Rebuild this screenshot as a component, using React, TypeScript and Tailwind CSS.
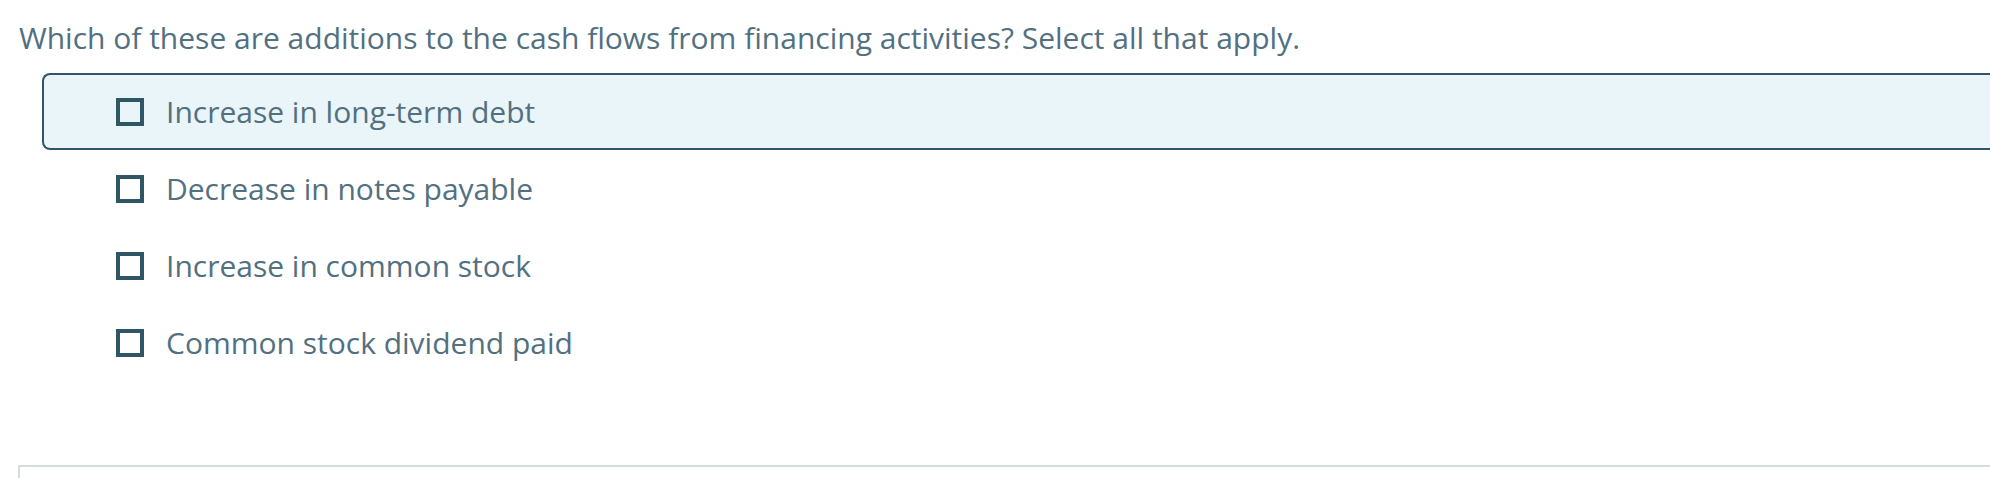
import { useState } from 'react';

const options = [
  'Increase in long-term debt',
  'Decrease in notes payable',
  'Increase in common stock',
  'Common stock dividend paid',
];

export default function App() {
  const [checked, setChecked] = useState<boolean[]>([false, false, false, false]);
  const focused = 0;

  return (
    <div className="min-h-[478px] bg-white overflow-hidden" style={{ fontFamily: '"Open Sans", "Noto Sans", sans-serif' }}>
      {/* Question */}
      <div className="pl-[19px] pt-[20px]">
        <p className="text-[30px] leading-[36px] text-[#52707f]">
          Which of these are additions to the cash flows from financing activities? Select all that apply.
        </p>

        {/* Options */}
        <ul className="mt-[17px] ml-[23px]">
          {options.map((label, i) => (
            <li key={label}>
              <label
                className={
                  i === focused
                    ? 'flex items-center h-[77px] pl-[72px] border-2 border-r-0 border-[#2e5665] rounded-l-[8px] bg-[#e9f5f8] cursor-pointer'
                    : 'flex items-center h-[77px] pl-[72px] border-2 border-transparent cursor-pointer'
                }
              >
                <span className="w-[28px] h-[28px] border-[4px] border-[#2e5665] shrink-0" />
                <input
                  type="checkbox"
                  className="hidden"
                  checked={checked[i]}
                  onChange={() => setChecked(c => c.map((v, j) => (j === i ? !v : v)))}
                />
                <span className="ml-[22px] text-[30px] leading-[36px] text-[#52707f]">{label}</span>
              </label>
            </li>
          ))}
        </ul>
      </div>

      {/* Next panel edge */}
      <div className="mt-[84px] ml-[18px] h-[20px] border-t-2 border-l-2 border-[#d5dbde]" />
    </div>
  );
}
